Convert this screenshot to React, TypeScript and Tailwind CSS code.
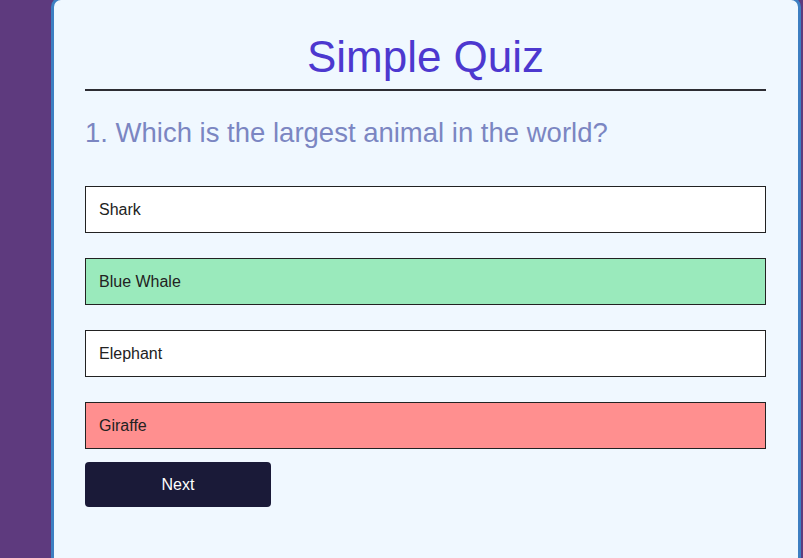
const options = [
  { label: "Shark", state: "idle" },
  { label: "Blue Whale", state: "correct" },
  { label: "Elephant", state: "idle" },
  { label: "Giraffe", state: "wrong" },
];

export default function App() {
  return (
    <div className="h-[558px] overflow-hidden bg-[#5e3a7e] font-['Liberation_Sans',Arial,sans-serif]">
      {/* Quiz card */}
      <div className="-mt-[3px] ml-[51px] h-[600px] w-[750px] rounded-[10px] border-[3px] border-[#3d7fc2] bg-[#f0f8ff] pl-[31px] pr-[32px] pt-[30px]">
        <h1 className="border-b-2 border-[#2d2d33] pb-[5px] text-center text-[44px] leading-[54px] text-[#4d38cf]">
          Simple Quiz
        </h1>

        <h2 className="mt-[26px] text-[27.5px] leading-[31px] text-[#7b86c2]">
          1. Which is the largest animal in the world?
        </h2>

        <div className="mt-[38px] flex flex-col gap-[25px]">
          {options.map((opt) => (
            <button
              key={opt.label}
              className={
                "flex h-[47px] w-full items-center border border-[#222] px-[13px] text-left text-[16px] text-[#222] " +
                (opt.state === "correct"
                  ? "bg-[#9aeabc]"
                  : opt.state === "wrong"
                    ? "bg-[#ff8f8f]"
                    : "bg-white")
              }
            >
              {opt.label}
            </button>
          ))}
        </div>

        <button className="mt-[13px] h-[45px] w-[186px] rounded-[4px] bg-[#1a1a38] text-[16px] text-white">
          Next
        </button>
      </div>
    </div>
  );
}
